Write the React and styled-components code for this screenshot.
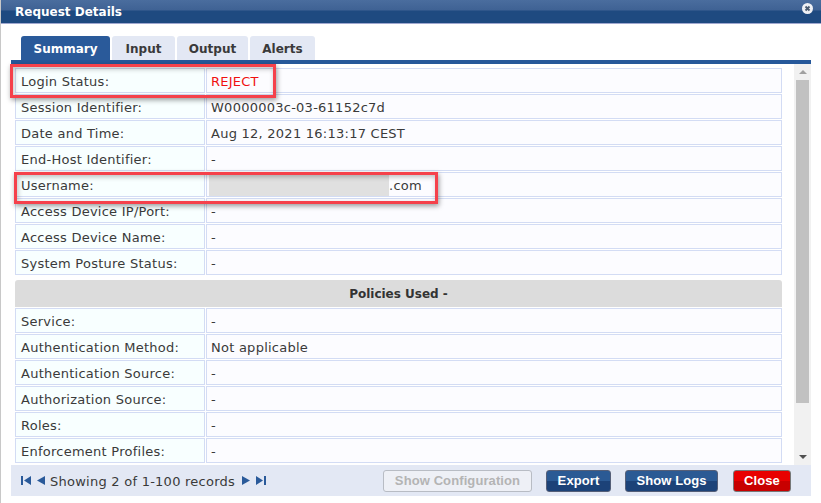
import React from 'react';
import styled, { createGlobalStyle } from 'styled-components';

const Global = createGlobalStyle`
  html, body { margin: 0; padding: 0; background: #fff; }
  body { font-family: "DejaVu Sans", Verdana, sans-serif; font-size: 13px; letter-spacing: 0.25px; color: #333; }
`;

const Page = styled.div`
  position: relative;
  width: 821px;
  height: 503px;
  overflow: hidden;
  border-left: 1px solid #c8c8c8;
  box-sizing: border-box;
`;

const TitleBar = styled.div`
  display: flex;
  align-items: center;
  justify-content: space-between;
  height: 24px;
  margin-left: -1px;
  padding: 0 8px 0 15px;
  box-sizing: border-box;
  background: linear-gradient(to bottom, #4a6d9e 0, #3f6294 10px, #1e4a80 11px, #1e4a80 23px);
  border-bottom: 1px solid #a0a8d0;
  color: #fff;
  font-weight: bold;
  font-size: 12px;
  letter-spacing: 0;
`;

const CloseDot = styled.svg`
  width: 11px;
  height: 11px;
  margin-top: -7px;
`;

const Body = styled.div`
  padding: 12px 10px 0 10px;
`;

const Tabs = styled.div`
  display: flex;
  gap: 2px;
  padding-left: 10px;
`;

const Tab = styled.div`
  height: 24px;
  line-height: 26px;
  width: ${p => p.$w}px;
  text-align: center;
  font-weight: bold;
  font-size: 12px;
  letter-spacing: 0;
  border-radius: 3px 3px 0 0;
  background: ${p => (p.$active ? '#2a5a9a' : '#e3e8f4')};
  color: ${p => (p.$active ? '#fff' : '#3a3a3a')};
`;

const Rule = styled.div`
  height: 4px;
  background: #26589a;
`;

const Middle = styled.div`
  display: flex;
  height: 401px;
`;

const Content = styled.div`
  width: 775px;
  padding: 4px 0 0 4px;
  box-sizing: border-box;
  overflow: hidden;
`;

const Table = styled.div`
  display: grid;
  grid-template-columns: 190px 1fr;
  gap: 1px 1px;
  width: 767px;
  padding-bottom: 1px;
`;

const Label = styled.div`
  height: 22px;
  line-height: 23px;
  padding: 1px 0 0 5px;
  border: 1px solid #d3dcf4;
  background: #f8ffff;
  color: #3a3a3a;
`;

const Value = styled.div`
  height: 22px;
  line-height: 23px;
  padding: 1px 0 0 4px;
  border: 1px solid #d3dcf4;
  background: #fcfcff;
  color: ${p => (p.$reject ? '#f01010' : '#3a3a3a')};
`;

const SectionHead = styled.div`
  height: 27px;
  margin: 4px 0 1px;
  width: 767px;
  line-height: 29px;
  text-align: center;
  font-weight: bold;
  font-size: 12px;
  letter-spacing: 0;
  background: #dcdcdc;
  border-radius: 3px 3px 0 0;
  color: #333;
`;

const Masked = styled.span`
  margin-left: 178px;
`;

const ScrollBar = styled.div`
  display: flex;
  flex-direction: column;
  align-items: center;
  justify-content: space-between;
  width: 17px;
  margin-left: 8px;
  background: #f1f1f1;
  padding: 6px 0;
  box-sizing: border-box;
`;

const Thumb = styled.div`
  width: 13px;
  height: 323px;
  margin-top: -1px;
  margin-bottom: 45px;
  background: #c1c1c1;
`;

const Arrow = styled.div`
  width: 0;
  height: 0;
  border-left: 4px solid transparent;
  border-right: 4px solid transparent;
  ${p => (p.$down ? 'border-top: 4px solid #505050;' : 'border-bottom: 4px solid #a0a0a0;')}
`;

const Footer = styled.div`
  display: flex;
  align-items: center;
  height: 31px;
  width: 800px;
  padding: 0 20px 0 10px;
  box-sizing: border-box;
  background: #e3e8f4;
`;

const Nav = styled.div`
  display: flex;
  align-items: center;
  gap: 5px;
  color: #3a3a3a;
`;

const Records = styled.span`
  margin: 1px 1px 0 -1px;
`;

const NavIcon = styled.svg`
  width: 10px;
  height: 9px;
  fill: #2a5a9a;
`;

const Buttons = styled.div`
  display: flex;
  gap: 14px;
  margin-left: auto;
`;

const Button = styled.div`
  height: 22px;
  line-height: 20px;
  box-sizing: border-box;
  width: ${p => p.$w}px;
  text-align: center;
  font-family: "Liberation Sans", Arial, sans-serif;
  font-weight: bold;
  font-size: 13px;
  letter-spacing: 0.1px;
  border-radius: 3px;
  color: #fff;
  border: 1px solid #555f78;
  background: linear-gradient(to bottom, #2b5a94 0, #2b5a94 50%, #1c4278 50%, #1c4278 100%);
  ${p => p.$disabled && `
    color: #b4b4b4;
    border-color: #b8bcc4;
    background: #eef0f6;
  `}
  ${p => p.$danger && `
    margin-left: 1px;
    border-color: #777;
    background: linear-gradient(to bottom, #e80000 0, #e80000 50%, #c80000 50%, #c80000 100%);
  `}
`;

const Callout = styled.div`
  position: absolute;
  left: ${p => p.$x}px;
  top: ${p => p.$y}px;
  width: ${p => p.$w}px;
  height: ${p => p.$h}px;
  box-sizing: border-box;
  border: 3px solid #f5414b;
  box-shadow: 1px 2px 5px rgba(0, 0, 0, 0.4), inset 1px 2px 5px rgba(0, 0, 0, 0.25);
`;

const Redaction = styled.div`
  position: absolute;
  left: 208px;
  top: 175px;
  width: 180px;
  height: 21px;
  background: #e0e0e0;
`;

const topRows = [
  ['Login Status:', 'REJECT'],
  ['Session Identifier:', 'W0000003c-03-61152c7d'],
  ['Date and Time:', 'Aug 12, 2021 16:13:17 CEST'],
  ['End-Host Identifier:', '-'],
  ['Username:', <Masked>.com</Masked>],
  ['Access Device IP/Port:', '-'],
  ['Access Device Name:', '-'],
  ['System Posture Status:', '-']
];

const policyRows = [
  ['Service:', '-'],
  ['Authentication Method:', 'Not applicable'],
  ['Authentication Source:', '-'],
  ['Authorization Source:', '-'],
  ['Roles:', '-'],
  ['Enforcement Profiles:', '-']
];

const Rows = ({ rows }) => (
  <Table>
    {rows.map(([label, value]) => (
      <React.Fragment key={label}>
        <Label>{label}</Label>
        <Value $reject={value === 'REJECT'}>{value}</Value>
      </React.Fragment>
    ))}
  </Table>
);

export default function App() {
  return (
    <Page>
      <Global />
      <TitleBar>
        <span>Request Details</span>
        <CloseDot viewBox="0 0 11 11">
          <circle cx="5.5" cy="5.5" r="5.5" fill="#eef0f4" />
          <path d="M3.5 3.5l4 4M7.500 3.500l-4 4" stroke="#4a5a70" strokeWidth="1.8" />
        </CloseDot>
      </TitleBar>
      <Body>
        <Tabs>
          <Tab $active $w={89}>Summary</Tab>
          <Tab $w={63}>Input</Tab>
          <Tab $w={71}>Output</Tab>
          <Tab $w={65}>Alerts</Tab>
        </Tabs>
        <Rule />
        <Middle>
          <Content>
            <Rows rows={topRows} />
            <SectionHead>Policies Used -</SectionHead>
            <Rows rows={policyRows} />
          </Content>
          <ScrollBar>
            <Arrow />
            <Thumb />
            <Arrow $down />
          </ScrollBar>
        </Middle>
        <Footer>
          <Nav>
            <NavIcon viewBox="0 0 10 9"><path d="M0 0h2v9H0zM10 0v9L3 4.500z" /></NavIcon>
            <NavIcon viewBox="0 0 10 9"><path d="M9 0v9L1 4.500z" /></NavIcon>
            <Records>Showing 2 of 1-100 records</Records>
            <NavIcon viewBox="0 0 10 9"><path d="M1 0v9l8-4.500z" /></NavIcon>
            <NavIcon viewBox="0 0 10 9"><path d="M0 0v9l7-4.500zM8 0h2v9H8z" /></NavIcon>
          </Nav>
          <Buttons>
            <Button $disabled $w={149}>Show Configuration</Button>
            <Button $w={65}>Export</Button>
            <Button $w={93}>Show Logs</Button>
            <Button $danger $w={58}>Close</Button>
          </Buttons>
        </Footer>
      </Body>
      <Redaction />
      <Callout $x={9} $y={64} $w={266} $h={34} />
      <Callout $x={13} $y={172} $w={424} $h={32} />
    </Page>
  );
}
